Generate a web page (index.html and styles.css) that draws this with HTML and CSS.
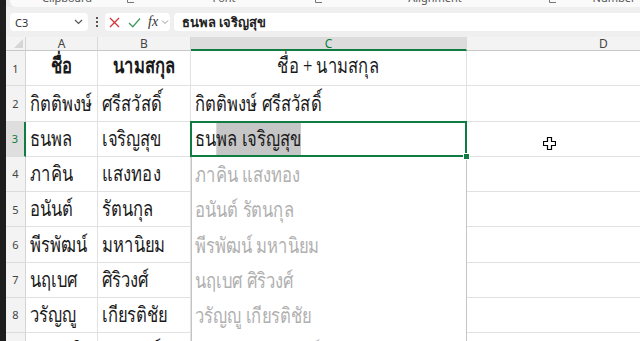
FILE: index.html
```html
<!DOCTYPE html>
<html lang="th">
<head>
    <meta charset="UTF-8">
    <meta name="viewport" content="width=device-width, initial-scale=1.0">
    <title>Excel - ชื่อ + นามสกุล</title>
    <link rel="stylesheet" href="styles.css">
</head>
<body>
    <div class="side"></div>
    <div class="app">
        <!-- ribbon group labels, cut off at the top -->
        <div class="ribbon">
            <div class="ribbon-panel">
                <div class="group g1"><span class="glabel">Clipboard</span></div>
                <div class="launch"><svg width="7" height="7" viewBox="0 0 7 7"><path d="M0.5 0v6.5h6.5M3 4l3.5-3.5" fill="none" stroke="#777" stroke-width="1"/></svg></div>
                <div class="group g2"><span class="glabel">Font</span></div>
                <div class="launch"><svg width="7" height="7" viewBox="0 0 7 7"><path d="M0.5 0v6.5h6.5M3 4l3.5-3.5" fill="none" stroke="#777" stroke-width="1"/></svg></div>
                <div class="group g3"><span class="glabel">Alignment</span></div>
                <div class="launch"><svg width="7" height="7" viewBox="0 0 7 7"><path d="M0.5 0v6.5h6.5M3 4l3.5-3.5" fill="none" stroke="#777" stroke-width="1"/></svg></div>
                <div class="group g4"><span class="glabel">Number</span></div>
            </div>
        </div>

        <!-- formula bar -->
        <div class="fbar">
            <div class="namebox">
                <span>C3</span>
                <svg width="9" height="6" viewBox="0 0 9 6"><path d="M1 1l3.5 3.5L8 1" fill="none" stroke="#555" stroke-width="1.2"/></svg>
            </div>
            <div class="dots"><i></i><i></i><i></i></div>
            <div class="fxbox">
                <svg width="11" height="11" viewBox="0 0 11 11"><path d="M1 1l9 9M10 1l-9 9" stroke="#d13438" stroke-width="1.3"/></svg>
                <svg width="13" height="11" viewBox="0 0 13 11"><path d="M1 6l3.8 3.8L12 1.5" fill="none" stroke="#3f9b5f" stroke-width="1.3"/></svg>
                <span class="fx">fx</span>
                <svg width="8" height="6" viewBox="0 0 8 6"><path d="M1 1.5l3 3 3-3" fill="none" stroke="#999" stroke-width="1"/></svg>
            </div>
            <div class="finput">ธนพล เจริญสุข</div>
        </div>

        <!-- sheet -->
        <div class="sheet">
            <div class="corner"><svg width="9" height="9" viewBox="0 0 9 9"><path d="M9 0v9H0z" fill="#d6d6d6"/></svg></div>
            <div class="ch">A</div>
            <div class="ch">B</div>
            <div class="ch ch-on">C</div>
            <div class="ch">D</div>

            <div class="rh">1</div>
            <div class="c mid"><span class="tx b">ชื่อ</span></div>
            <div class="c mid"><span class="tx b">นามสกุล</span></div>
            <div class="c mid"><span class="tx">ชื่อ + นามสกุล</span></div>
            <div class="c"></div>

            <div class="rh">2</div>
            <div class="c"><span class="tx">กิตติพงษ์</span></div>
            <div class="c"><span class="tx">ศรีสวัสดิ์</span></div>
            <div class="c"><span class="tx">กิตติพงษ์ ศรีสวัสดิ์</span></div>
            <div class="c"></div>

            <div class="rh rh-on">3</div>
            <div class="c"><span class="tx">ธนพล</span></div>
            <div class="c"><span class="tx">เจริญสุข</span></div>
            <div class="c active"><span class="tx edit"><span>ธน</span><span class="hl">พล เจริญสุข</span></span></div>
            <div class="c"></div>

            <div class="rh">4</div>
            <div class="c"><span class="tx">ภาคิน</span></div>
            <div class="c"><span class="tx">แสงทอง</span></div>
            <div class="c pv"><span class="tx">ภาคิน แสงทอง</span></div>
            <div class="c"></div>

            <div class="rh">5</div>
            <div class="c"><span class="tx">อนันต์</span></div>
            <div class="c"><span class="tx">รัตนกุล</span></div>
            <div class="c pv"><span class="tx">อนันต์ รัตนกุล</span></div>
            <div class="c"></div>

            <div class="rh">6</div>
            <div class="c"><span class="tx">พีรพัฒน์</span></div>
            <div class="c"><span class="tx">มหานิยม</span></div>
            <div class="c pv"><span class="tx">พีรพัฒน์ มหานิยม</span></div>
            <div class="c"></div>

            <div class="rh">7</div>
            <div class="c"><span class="tx">นฤเบศ</span></div>
            <div class="c"><span class="tx">ศิริวงศ์</span></div>
            <div class="c pv"><span class="tx">นฤเบศ ศิริวงศ์</span></div>
            <div class="c"></div>

            <div class="rh">8</div>
            <div class="c"><span class="tx">วรัญญู</span></div>
            <div class="c"><span class="tx">เกียรติชัย</span></div>
            <div class="c pv"><span class="tx">วรัญญู เกียรติชัย</span></div>
            <div class="c"></div>

            <div class="rh">9</div>
            <div class="c"><span class="tx">ประเสริฐ</span></div>
            <div class="c"><span class="tx">ทองพงษ์</span></div>
            <div class="c pv"><span class="tx">ประเสริฐ ทองพงษ์</span></div>
            <div class="c"></div>
        </div>
    </div>

    <!-- mouse pointer over D3 -->
    <svg class="pointer" width="13" height="13" viewBox="0 0 13 13"><path d="M4.5 0.5h4v4h4v4h-4v4h-4v-4h-4v-4h4z" fill="#fff" stroke="#000" stroke-width="1.2"/></svg>
</body>
</html>
```

FILE: styles.css
```css
body {
    margin: 0;
    height: 100vh;
    display: flex;
    overflow: hidden;
    background-color: #f0f0f0;
    font-family: "Noto Sans", "Open Sans", sans-serif;
}

.side {
    width: 6px;
    flex: none;
    background-color: #1d1d1d;
}

.app {
    flex: 1;
    min-width: 0;
    display: flex;
    flex-direction: column;
}

/* ribbon */
.ribbon {
    height: 7px;
    flex: none;
    padding-left: 4px;
    display: flex;
    background-color: #e9e9e9;
}

.ribbon-panel {
    flex: 1;
    display: flex;
    overflow: hidden;
    background-color: #fafafa;
    border-radius: 0 0 0 6px;
}

.group {
    flex: none;
    display: flex;
    justify-content: center;
}

.g1 { width: 114px; }
.g2 { width: 176px; }
.g3 { width: 222px; }
.g4 { width: 112px; }

.glabel {
    font-size: 11px;
    line-height: 11px;
    margin-top: -8px;
    color: #555;
}

.launch {
    width: 12px;
    flex: none;
    display: flex;
    justify-content: center;
}

.launch svg {
    margin-top: -4px;
}

/* formula bar */
.fbar {
    height: 30px;
    flex: none;
    box-sizing: border-box;
    padding: 6px 0 6px 4px;
    display: flex;
    align-items: stretch;
    background-color: #efefef;
}

.namebox {
    width: 78px;
    box-sizing: border-box;
    padding: 0 5px 0 5px;
    display: flex;
    align-items: center;
    justify-content: space-between;
    background-color: #fff;
    border-radius: 4px;
    font-size: 11px;
    color: #333;
}

.dots {
    width: 17px;
    display: flex;
    flex-direction: column;
    align-items: center;
    justify-content: center;
    gap: 2px;
}

.dots i {
    width: 2px;
    height: 2px;
    background-color: #555;
}

.fxbox {
    width: 65px;
    box-sizing: border-box;
    padding-left: 4px;
    display: flex;
    align-items: center;
    gap: 6px;
    background-color: #fff;
    border-radius: 4px;
}

.fxbox svg:nth-child(2) {
    margin-left: 2px;
}

.fx {
    font-family: "Liberation Serif", serif;
    font-style: italic;
    font-size: 14px;
    color: #333;
    margin-left: 1px;
    margin-right: -3px;
}

.finput {
    flex: 1;
    margin-left: 4px;
    padding-left: 8px;
    display: flex;
    align-items: center;
    background-color: #fff;
    border-radius: 4px 0 0 4px;
    font-size: 13px;
    font-weight: 600;
    color: #222;
}

/* sheet */
.sheet {
    flex: 1;
    display: grid;
    grid-template-columns: 20px 72px 93px 276px 274px;
    grid-template-rows: 14px repeat(9, 35.25px);
    background-color: #fff;
    overflow: hidden;
}

.corner {
    background-color: #f3f3f3;
    border-right: 1px solid #d4d4d4;
    border-bottom: 1px solid #c8c8c8;
    box-sizing: border-box;
    display: flex;
    align-items: flex-end;
    justify-content: flex-end;
    padding: 0 2px 2px 0;
}

.ch {
    background-color: #f3f3f3;
    border-right: 1px solid #d8d8d8;
    border-bottom: 1px solid #c8c8c8;
    box-sizing: border-box;
    display: flex;
    align-items: center;
    justify-content: center;
    font-size: 12px;
    color: #444;
}

.ch-on {
    background-color: #dcdcdc;
    border-bottom: 2px solid #107c41;
    color: #107c41;
}

.rh {
    background-color: #f3f3f3;
    border-right: 1px solid #d4d4d4;
    border-bottom: 1px solid #dcdcdc;
    box-sizing: border-box;
    display: flex;
    align-items: center;
    justify-content: center;
    font-size: 11px;
    color: #444;
}

.rh-on {
    background-color: #dedede;
    border-right: 2px solid #107c41;
    color: #107c41;
}

.c {
    border-right: 1px solid #e1e1e1;
    border-bottom: 1px solid #e1e1e1;
    box-sizing: border-box;
    display: flex;
    align-items: flex-end;
    padding: 0 4px 6px;
    font-family: "Norasi", "Kinnari", "Liberation Serif", serif;
    font-size: 21px;
    line-height: 1;
    color: #1a1a1a;
    white-space: nowrap;
}

.tx {
    display: inline-block;
    transform: scaleX(0.79);
    transform-origin: 0 100%;
}

.mid {
    justify-content: center;
    padding-bottom: 8px;
}

.mid .tx {
    transform-origin: 50% 100%;
}

.b {
    font-weight: bold;
}

/* active cell in edit mode */
.active {
    position: relative;
    align-items: stretch;
    padding-bottom: 0;
}

.active::after {
    content: "";
    position: absolute;
    left: -1px;
    top: -1px;
    right: -1px;
    bottom: -1px;
    border: 2px solid #107c41;
    z-index: 2;
}

.active::before {
    content: "";
    position: absolute;
    right: -4px;
    bottom: -4px;
    width: 5px;
    height: 5px;
    background-color: #107c41;
    border: 1px solid #fff;
    z-index: 3;
}

.edit {
    display: flex;
}

.edit span {
    display: flex;
    align-items: flex-end;
    padding-bottom: 6px;
}

.edit .hl {
    background-color: #c6c6c6;
}

/* flash fill preview */
.pv {
    border-bottom: none;
    border-right: 1px solid #c4c4c4;
    box-shadow: inset 1px 0 #c4c4c4;
    color: #b0b0b0;
}

.pointer {
    position: absolute;
    left: 543px;
    top: 137px;
}
```
